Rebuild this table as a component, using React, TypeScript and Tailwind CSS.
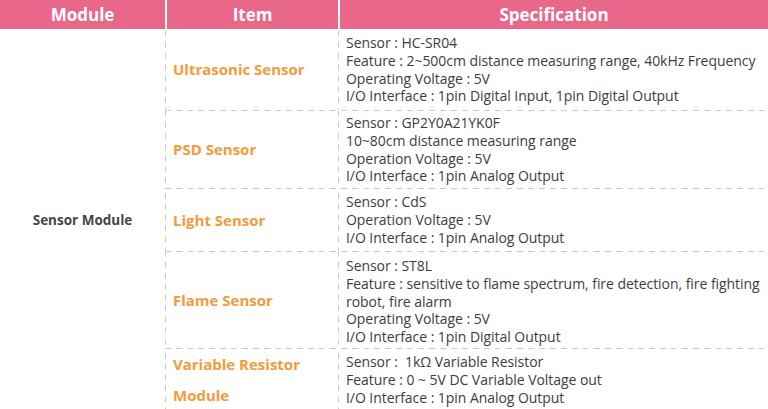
import React from "react";

type Row = { item: string[]; spec: string[]; h: string };

const rows: Row[] = [
  {
    item: ["Ultrasonic Sensor"],
    spec: [
      "Sensor : HC-SR04",
      "Feature : 2~500cm distance measuring range, 40kHz Frequency",
      "Operating Voltage : 5V",
      "I/O Interface : 1pin Digital Input, 1pin Digital Output",
    ],
    h: "h-[81px] pt-[5px]",
  },
  {
    item: ["PSD Sensor"],
    spec: [
      "Sensor : GP2Y0A21YK0F",
      "10~80cm distance measuring range",
      "Operation Voltage : 5V",
      "I/O Interface : 1pin Analog Output",
    ],
    h: "h-[77px] pt-[3px]",
  },
  {
    item: ["Light Sensor"],
    spec: ["Sensor : CdS", "Operation Voltage : 5V", "I/O Interface : 1pin Analog Output"],
    h: "h-[62px] pt-[4px]",
  },
  {
    item: ["Flame Sensor"],
    spec: [
      "Sensor : ST8L",
      "Feature : sensitive to flame spectrum, fire detection, fire fighting",
      "robot, fire alarm",
      "Operating Voltage : 5V",
      "I/O Interface : 1pin Digital Output",
    ],
    h: "h-[96px] pt-[5px]",
  },
  {
    item: ["Variable Resistor", "Module"],
    spec: [
      "Sensor :  1kΩ Variable Resistor",
      "Feature : 0 ~ 5V DC Variable Voltage out",
      "I/O Interface : 1pin Analog Output",
    ],
    h: "h-[62px] pt-[4px]",
  },
];

const vline =
  "bg-[linear-gradient(to_bottom,#cccccc_6px,transparent_6px)] bg-[length:1px_11px] bg-repeat-y bg-left";

export default function App() {
  return (
    <div
      className="w-[768px] h-[409px] overflow-hidden bg-white"
      style={{ fontFamily: '"Open Sans", "Noto Sans", sans-serif' }}
    >
      <div className="flex h-[29px] bg-[#e8678b] text-white font-bold text-[17px]">
        <div className="w-[165px] flex items-center justify-center">Module</div>
        <div className="w-[173px] flex items-center justify-center border-l-2 border-white">Item</div>
        <div className="flex-1 flex items-center justify-center border-l-2 border-white">Specification</div>
      </div>
      <div className="flex">
        <div className="w-[165px] flex items-center justify-center text-[13.5px] font-bold text-[#454545]">
          Sensor Module
        </div>
        <div className="flex-1 flex flex-col">
          {rows.map((r, i) => (
            <div key={i} className="flex flex-col">
              <div className="flex">
                <div
                  className={`w-[173px] ${vline} flex flex-col justify-center pl-[8px] text-[15px] font-bold text-[#f59a3a] leading-[31px]`}
                >
                  {r.item.map((t) => (
                    <div key={t}>{t}</div>
                  ))}
                </div>
                <div
                  className={`flex-1 ${vline} pl-[8px] text-[14px] leading-[17.8px] text-[#3d3d3d] tracking-[-0.05px] ${r.h}`}
                >
                  {r.spec.map((t, j) => (
                    <div key={j} className="whitespace-pre">{t}</div>
                  ))}
                </div>
              </div>
              {i < rows.length - 1 && (
                <div className="h-px bg-[linear-gradient(to_right,#cccccc_6px,transparent_6px)] bg-[length:11px_1px] bg-repeat-x" />
              )}
            </div>
          ))}
        </div>
      </div>
    </div>
  );
}
